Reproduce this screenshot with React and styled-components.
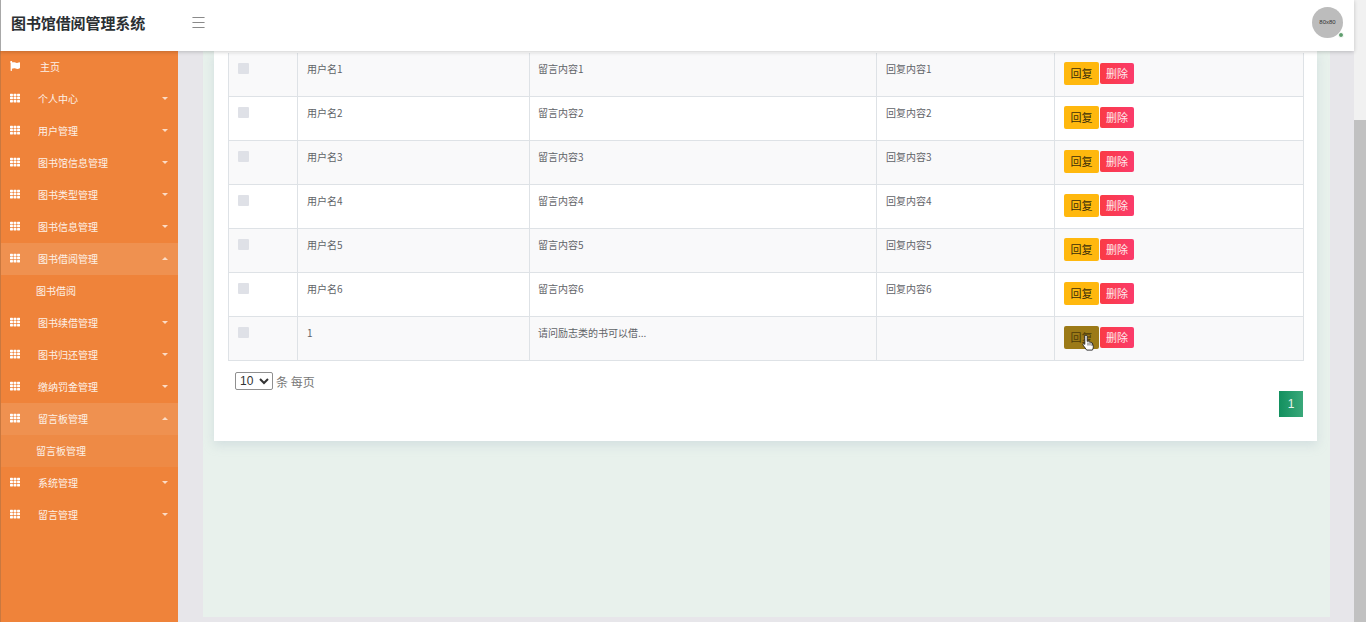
import React from 'react';
import styled, { createGlobalStyle } from 'styled-components';
import { FaFlag, FaTh } from 'react-icons/fa';
import { Menu } from 'lucide-react';

const GlobalStyle = createGlobalStyle`
  html, body {
    margin: 0;
    height: 100%;
    overflow: hidden;
  }
  body {
    font-family: "Noto Sans CJK SC", "Liberation Sans", sans-serif;
    background: #e7e6ea;
  }
`
const Page = styled.div`
  display: flex;
  width: 1366px;
  height: 622px;
  overflow: hidden;
`
const Frame = styled.div`
  flex: 1;
  min-width: 0;
  display: flex;
  flex-direction: column;
`
const Scrollbar = styled.div`
  width: 12px;
  background: #f1f1f1;
  display: flex;
  flex-direction: column;
  padding-top: 120px;
  box-sizing: border-box;
`
const Thumb = styled.div`
  flex: 1;
  background: #c1c1c1;
`
const Header = styled.header`
  height: 51px;
  flex-shrink: 0;
  background: #fff;
  display: flex;
  align-items: center;
  padding: 0 11px 7px 11px;
  box-sizing: border-box;
  border-left: 1px solid #a8a8a8;
  box-shadow: 0 1px 4px rgba(0, 0, 0, 0.2);
  position: relative;
  z-index: 2;
`
const Title = styled.div`
  width: 179px;
  margin-left: -1px;
  font-size: 15px;
  font-weight: 700;
  letter-spacing: -0.1px;
  color: #2b2f33;
  white-space: nowrap;
`
const Burger = styled.div`
  color: #8a8a8a;
  display: flex;
`
const Avatar = styled.div`
  margin-left: auto;
  width: 31px;
  height: 31px;
  border-radius: 50%;
  background: #bcbcbc;
  color: #333;
  font-size: 6px;
  display: flex;
  align-items: center;
  justify-content: center;
  position: relative;
  font-family: "Liberation Sans", sans-serif;
`
const OnlineDot = styled.span`
  position: absolute;
  right: -1px;
  bottom: 0;
  width: 6px;
  height: 6px;
  border-radius: 50%;
  background: #5f9e6e;
  border: 1px solid #fff;
  box-sizing: border-box;
`
const Body = styled.div`
  flex: 1;
  min-height: 0;
  display: flex;
`
const Sidebar = styled.nav`
  width: 178px;
  flex-shrink: 0;
  background: #ef833a;
  border-left: 1px solid #c9783f;
  box-sizing: border-box;
  color: #fff;
  font-size: 10px;
`
const NavRow = styled.div`
  height: 32px;
  box-sizing: border-box;
  display: flex;
  align-items: center;
  padding: 0 9px 2px 9px;
  background: ${(props) => (props.$open ? '#ef9150' : 'transparent')};
`
const NavIcon = styled.span`
  width: 28px;
  display: flex;
  font-size: 10px;
  margin-top: -1px;
`
const NavText = styled.span`
  flex: 1;
  margin-left: ${(props) => (props.$home ? '2px' : '0')};
  color: #fdf1e8;
`
const Caret = styled.span`
  width: 0;
  height: 0;
  margin-right: 1px;
  border-left: 3px solid transparent;
  border-right: 3px solid transparent;
  ${(props) =>
    props.$up
      ? 'border-bottom: 3px solid #fbdcc6;'
      : 'border-top: 3px solid #fbdcc6;'}
`
const SubRow = styled.div`
  height: 32px;
  box-sizing: border-box;
  display: flex;
  align-items: center;
  padding: 0 0 2px 35px;
  color: #fdf1e8;
  background: ${(props) => (props.$current ? '#ee8a45' : 'transparent')};
`
const Main = styled.main`
  flex: 1;
  min-width: 0;
  padding: 0 24px 5px 25px;
  display: flex;
`
const Panel = styled.div`
  flex: 1;
  min-width: 0;
  background: #e8f1ec;
  padding: 0 13px 0 11px;
`
const Card = styled.section`
  background: #fff;
  padding: 2px 14px 24px 14px;
  box-shadow: 0 4px 10px rgba(170, 190, 200, 0.35);
`
const Table = styled.table`
  width: 1076px;
  table-layout: fixed;
  border-collapse: separate;
  border-spacing: 0;
  font-size: 10px;
  color: #5f6368;
`
const Row = styled.tr`
  height: 44px;
  background: ${(props) => (props.$striped ? '#f9f9fa' : '#fff')};
`
const Cell = styled.td`
  border-bottom: 1px solid #dee2e6;
  border-right: 1px solid #dee2e6;
  &:first-child {
    border-left: 1px solid #dee2e6;
  }
  &:nth-child(3) {
    padding-left: 8px;
  }
  padding: 8px 9px 0 9px;
  vertical-align: top;
  box-sizing: border-box;
  line-height: 15px;
`
const CheckBox = styled.span`
  display: block;
  width: 11px;
  height: 11px;
  background: #dfe1e7;
  border-radius: 1px;
  margin-top: 2px;
`
const Actions = styled.div`
  display: flex;
  align-items: center;
  gap: 1px;
  height: 23px;
  margin-top: 1px;
  position: relative;
`
const ReplyButton = styled.button`
  width: 35px;
  height: 23px;
  padding: 0;
  border: none;
  border-radius: 2px;
  font: inherit;
  font-size: 11px;
  color: ${(props) => (props.$hover ? '#4d3c0a' : '#3a2e0a')};
  background: ${(props) => (props.$hover ? '#9c7a17' : '#ffb80e')};
`
const DeleteButton = styled.button`
  width: 34px;
  height: 21px;
  padding: 0;
  border: none;
  border-radius: 2px;
  font: inherit;
  font-size: 11px;
  color: #ffe9ec;
  background: linear-gradient(90deg, #fa3b45, #fb3b6b);
`
const Cursor = styled.svg`
  position: absolute;
  left: 18px;
  top: 8px;
  width: 13px;
  height: 17px;
`
const SizeRow = styled.div`
  display: flex;
  align-items: center;
  padding: 11px 0 0 7px;
  font-size: 12px;
  color: #777;
`
const SizeSelect = styled.select`
  width: 38px;
  height: 18px;
  margin-right: 3px;
  font-size: 12px;
  font-family: "Liberation Sans", sans-serif;
  color: #333;
  background: #fff;
  border: 1px solid #8f8f8f;
  border-radius: 2px;
  padding: 0;
`
const Pager = styled.div`
  display: flex;
  justify-content: flex-end;
  margin-top: 1px;
`
const PageNum = styled.span`
  width: 24px;
  height: 26px;
  display: flex;
  align-items: center;
  justify-content: center;
  font-size: 12px;
  color: #e8f5ee;
  font-family: "Liberation Sans", sans-serif;
  background: linear-gradient(90deg, #12905f, #3aa87a);
`

const menu = [
  { name: '个人中心' },
  { name: '用户管理' },
  { name: '图书馆信息管理' },
  { name: '图书类型管理' },
  { name: '图书信息管理' },
  { name: '图书借阅管理', sub: '图书借阅' },
  { name: '图书续借管理' },
  { name: '图书归还管理' },
  { name: '缴纳罚金管理' },
  { name: '留言板管理', sub: '留言板管理', current: true },
  { name: '系统管理' },
  { name: '留言管理' },
]

const rows = [
  ['用户名1', '留言内容1', '回复内容1'],
  ['用户名2', '留言内容2', '回复内容2'],
  ['用户名3', '留言内容3', '回复内容3'],
  ['用户名4', '留言内容4', '回复内容4'],
  ['用户名5', '留言内容5', '回复内容5'],
  ['用户名6', '留言内容6', '回复内容6'],
  ['1', '请问励志类的书可以借...', ''],
]

function App() {
  return (
    <Page>
      <GlobalStyle />
      <Frame>
        <Header>
          <Title>图书馆借阅管理系统</Title>
          <Burger><Menu size={17} strokeWidth={1.5} /></Burger>
          <Avatar>80x80<OnlineDot /></Avatar>
        </Header>
        <Body>
          <Sidebar>
            <NavRow>
              <NavIcon><FaFlag /></NavIcon>
              <NavText $home>主页</NavText>
            </NavRow>
            {menu.map((item) => (
              <React.Fragment key={item.name}>
                <NavRow $open={!!item.sub}>
                  <NavIcon><FaTh /></NavIcon>
                  <NavText>{item.name}</NavText>
                  <Caret $up={!!item.sub} />
                </NavRow>
                {item.sub && <SubRow $current={item.current}>{item.sub}</SubRow>}
              </React.Fragment>
            ))}
          </Sidebar>
          <Main>
            <Panel>
              <Card>
                <Table>
                  <colgroup>
                    <col width="70" />
                    <col width="232" />
                    <col width="347" />
                    <col width="178" />
                    <col width="249" />
                  </colgroup>
                  <tbody>
                    {rows.map((row, i) => (
                      <Row key={i} $striped={i % 2 === 0}>
                        <Cell><CheckBox /></Cell>
                        <Cell>{row[0]}</Cell>
                        <Cell>{row[1]}</Cell>
                        <Cell>{row[2]}</Cell>
                        <Cell>
                          <Actions>
                            <ReplyButton $hover={i === 6}>回复</ReplyButton>
                            <DeleteButton>删除</DeleteButton>
                            {i === 6 && (
                              <Cursor viewBox="0 0 13 17">
                                <path
                                  d="M4 1.2c.7 0 1.2.5 1.2 1.2v5l.6-.2c.6-.2 1.2 0 1.4.5l.1.3c.6-.3 1.3-.1 1.5.5.6-.2 1.2 0 1.5.6l.9 2.6c.3 1.5 0 3-.8 4.4H4.700c-.9-1.300-1.900-2.700-3-4.100-.4-.6-.9-1.200-.8-1.800.1-.6.800-.8 1.300-.4l.6.6V2.400C2.800 1.700 3.300 1.200 4 1.200z"
                                  fill="#fff"
                                  stroke="#222"
                                  strokeWidth="0.9"
                                />
                                <path d="M6 8.500v3M8 8.500v3M10 9v3" stroke="#222" strokeWidth="0.7" />
                              </Cursor>
                            )}
                          </Actions>
                        </Cell>
                      </Row>
                    ))}
                  </tbody>
                </Table>
                <SizeRow>
                  <SizeSelect defaultValue="10">
                    <option value="10">10</option>
                    <option value="20">20</option>
                    <option value="50">50</option>
                  </SizeSelect>
                  条 每页
                </SizeRow>
                <Pager><PageNum>1</PageNum></Pager>
              </Card>
            </Panel>
          </Main>
        </Body>
      </Frame>
      <Scrollbar><Thumb /></Scrollbar>
    </Page>
  );
}

export default App;
